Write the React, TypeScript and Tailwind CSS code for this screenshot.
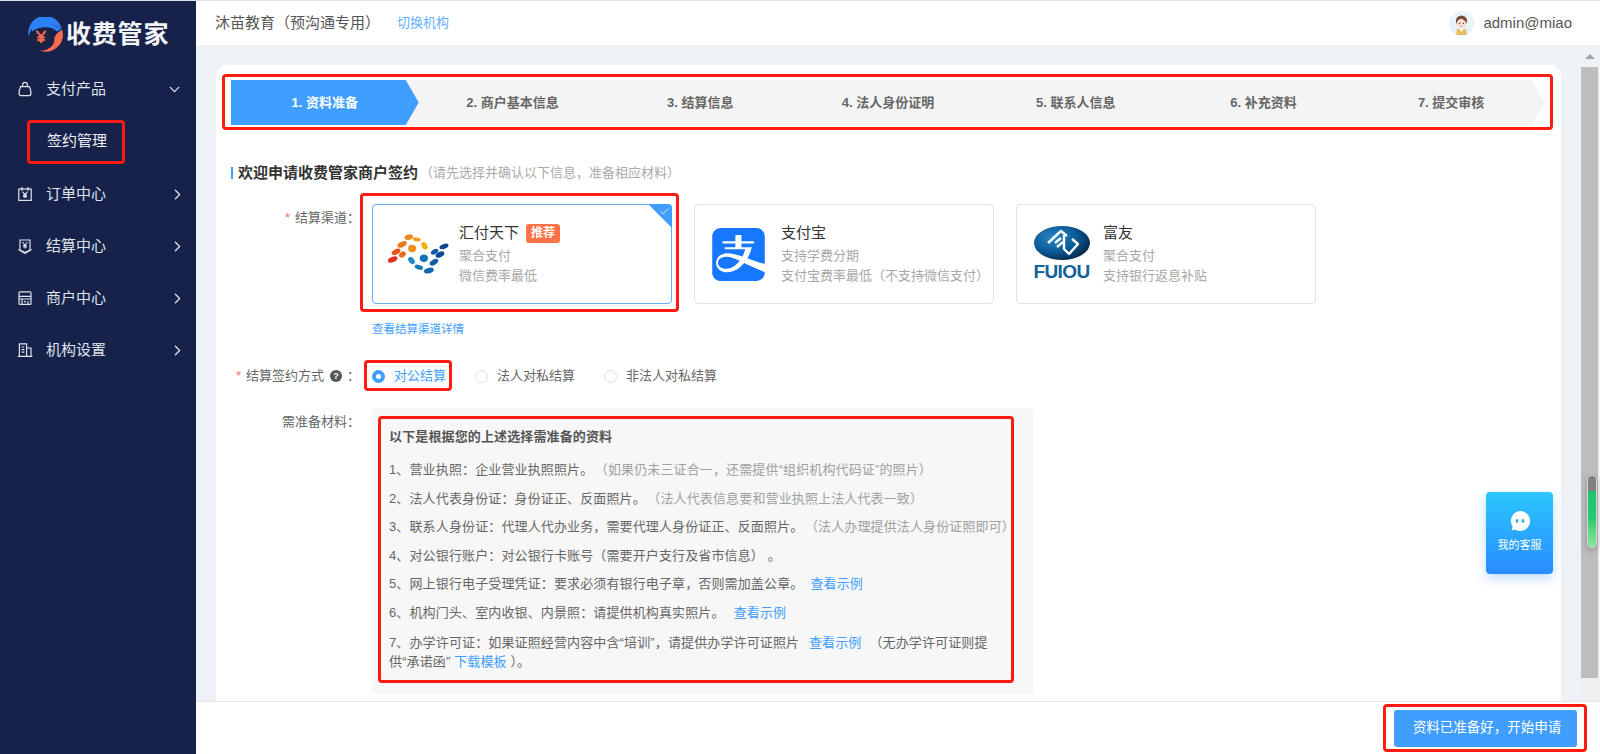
import { ChevronDown, ChevronRight, Check } from "lucide-react";
import { SiAlipay } from "react-icons/si";
import type { ReactNode } from "react";

// red annotation frame drawn over a block of the page
function RedBox({ className }: { className: string }) {
  return <div className={`pointer-events-none absolute rounded-[4px] border-[3px] border-[#ff1a12] ${className}`} />;
}

function Yen({ x, y, s = 1 }: { x: number; y: number; s?: number }) {
  return (
    <path
      transform={`translate(${x} ${y}) scale(${s})`}
      d="M-2.5 -3 L0 0 L2.5 -3 M0 0 V3.5 M-2 0.5 H2 M-2 2 H2"
      fill="none"
      stroke="currentColor"
      strokeWidth="1.1"
    />
  );
}

const icons: Record<string, ReactNode> = {
  bag: (
    <>
      <path d="M3.6 5.6 H12.4 C13.2 7.5 14 10.5 14 12.6 A2 2 0 0 1 12 14.6 H4 A2 2 0 0 1 2 12.6 C2 10.5 2.8 7.5 3.6 5.6 Z" />
      <path d="M5.6 5.6 V3.8 A2.4 2.4 0 0 1 10.4 3.8 V5.6" />
    </>
  ),
  calendar: (
    <>
      <rect x="1.8" y="3" width="12.4" height="11.4" />
      <path d="M5 1.2 V4.4 M11 1.2 V4.4" strokeWidth="1.6" />
      <Yen x={8} y={8.6} />
    </>
  ),
  shield: (
    <>
      <path d="M3 2 H13 V12 L8 14.6 L3 12 Z" />
      <path d="M1.4 11.4 L8 15.4 L14.6 11.4" />
      <Yen x={8} y={7} />
    </>
  ),
  store: (
    <>
      <rect x="2" y="1.8" width="12" height="12.6" rx="1" />
      <path d="M2 6.4 H14 M2 9 H14 M5 9 V14.4 M11 11 V14.4 M7 11.6 H9" />
    </>
  ),
  building: (
    <>
      <path d="M2.4 14 V1.8 H9.6 V14" />
      <path d="M9.6 6 H14 V14" />
      <path d="M4.6 5 H7.4 M4.6 7.6 H7.4 M4.6 10.2 H7.4 M0.8 14.4 H15.4" />
    </>
  ),
};

function MenuItem({ icon, label, open }: { icon: string; label: string; open?: boolean }) {
  return (
    <div className="flex h-[52px] items-center pl-[17px] pr-[10px] text-[15px] text-[#dfe3ec]">
      <svg viewBox="0 0 16 16" fill="none" stroke="currentColor" strokeWidth="1.2" className="h-4 w-4 shrink-0">
        {icons[icon]}
      </svg>
      <span className="ml-[13px] flex-1">{label}</span>
      {open ? (
        <ChevronDown size={17} strokeWidth={1.8} className="mr-[3px]" />
      ) : (
        <ChevronRight size={17} strokeWidth={1.8} />
      )}
    </div>
  );
}

function Sidebar() {
  return (
    <aside className="w-[196px] shrink-0 bg-[#16224a]">
      <div className="flex h-[62px] items-center pl-[28px] pt-[4px]">
        <svg viewBox="0 0 36 36" className="h-[35px] w-[35px]">
          <path d="M0.5 20 A17.5 17.5 0 0 1 35 13 C30 7 17 6 8 9 C4 11 2 15 0.5 20 Z" fill="#2b80f5" />
          <path d="M35 13 A17.5 17.5 0 0 1 12 34.5 C22 35 28 28 27 22 C28 18 31 15 35 13 Z" fill="#ff6a4f" />
          <circle cx="13.5" cy="20" r="10.5" fill="#1b2440" />
          <path d="M4 11 C10 6 24 5 34 12 L30 15 C24 9 12 9 4 15 Z" fill="#2b80f5" />
          <g className="text-[#ff6a4f]">
            <Yen x={13.5} y={20} s={1.9} />
          </g>
        </svg>
        <span className="ml-[3px] text-[25px] font-bold leading-none tracking-[0.8px] text-[#f2f4f8]">收费管家</span>
      </div>
      <MenuItem icon="bag" label="支付产品" open />
      <div className="relative flex h-[53px] items-center pl-[47px] text-[15px] text-[#eef0f5]">
        签约管理
        <RedBox className="left-[27px] top-[5px] h-[44px] w-[98px]" />
      </div>
      <MenuItem icon="calendar" label="订单中心" />
      <MenuItem icon="shield" label="结算中心" />
      <MenuItem icon="store" label="商户中心" />
      <MenuItem icon="building" label="机构设置" />
    </aside>
  );
}

function Header() {
  return (
    <header className="flex h-[44px] shrink-0 items-center bg-white pl-[19px] pr-[28px]">
      <span className="text-[15px] text-[#555]">沐苗教育（预沟通专用）</span>
      <span className="ml-[17px] text-[13px] text-[#66b1ff]">切换机构</span>
      <svg viewBox="0 0 25 25" className="ml-auto h-[25px] w-[25px]">
        <circle cx="12.5" cy="12.5" r="12.5" fill="#e8f3fb" />
        <path d="M7 24 L8 18 H17 L18 24 Z" fill="#e5bd62" />
        <path d="M10.5 18 L12.5 21 L14.5 18 Z" fill="#fff" />
        <circle cx="12.5" cy="10" r="5.6" fill="#7a4a34" />
        <ellipse cx="12.5" cy="12.4" rx="4.6" ry="4.8" fill="#fbdcd0" />
        <path d="M8 11 C9 8 12 8 13 7.6 C14 9 16 9.5 17 11 L17 8 L13 5.6 L9 6.6 Z" fill="#7a4a34" />
        <circle cx="10.6" cy="12.4" r="0.6" fill="#333" />
        <circle cx="14.4" cy="12.4" r="0.6" fill="#333" />
        <circle cx="12.5" cy="15.2" r="0.7" fill="#ef7a80" />
      </svg>
      <span className="ml-[9px] text-[15px] text-[#555]">admin@miao</span>
    </header>
  );
}

const STEPS = ["1. 资料准备", "2. 商户基本信息", "3. 结算信息", "4. 法人身份证明", "5. 联系人信息", "6. 补充资料", "7. 提交审核"];

function Steps() {
  return (
    <div className="relative mr-[16px] h-[45px]">
      <div className="grid h-full grid-cols-7 bg-[#f4f4f4] [clip-path:polygon(0_0,calc(100%-13px)_0,100%_50%,calc(100%-13px)_100%,0_100%)]">
        {STEPS.map((s, i) => (
          <div
            key={s}
            className={
              i === 0
                ? "flex items-center justify-center bg-[#409eff] text-[13px] font-bold text-white [clip-path:polygon(0_0,calc(100%-13px)_0,100%_50%,calc(100%-13px)_100%,0_100%)]"
                : "flex items-center justify-center text-[13px] font-bold text-[#666]"
            }
          >
            {s}
          </div>
        ))}
      </div>
      <RedBox className="-bottom-[5px] -left-[9px] -right-[8px] -top-[6px]" />
    </div>
  );
}

function HuifuLogo() {
  const dots: [number, number, number, number, number, string][] = [
    [37, 107, 15, 8, -20, "#e0301e"],
    [47, 84, 14, 8, -25, "#e8561f"],
    [66, 92, 11, 8, -35, "#e96a20"],
    [65, 62, 15, 8, -25, "#ec7a1e"],
    [85, 40, 13, 8, -15, "#ee8a25"],
    [95, 74, 12, 11, 0, "#f09020"],
    [109, 47, 12, 6, 10, "#eea020"],
    [132, 66, 8, 12, -30, "#f0b010"],
    [93, 110, 8, 12, -40, "#1e88d0"],
    [115, 130, 13, 7, 15, "#1a78c0"],
    [130, 103, 12, 11, 0, "#1070b8"],
    [145, 140, 15, 8, -15, "#0f68b0"],
    [160, 115, 14, 8, -30, "#0f5fa8"],
    [178, 92, 14, 8, -25, "#0a4c98"],
    [162, 84, 12, 7, -30, "#0f5aa5"],
    [190, 68, 14, 7, -20, "#0a4590"],
  ];
  return (
    <svg viewBox="20 28 185 125" className="ml-[3px] h-[42px] w-[62px]">
      {dots.map(([cx, cy, rx, ry, r, c]) => (
        <ellipse key={`${cx}-${cy}`} cx={cx} cy={cy} rx={rx} ry={ry} fill={c} transform={`rotate(${r} ${cx} ${cy})`} />
      ))}
    </svg>
  );
}

function FuiouLogo() {
  return (
    <div className="ml-[3px] flex w-[58px] flex-col items-center">
      <svg viewBox="0 0 56 34" className="h-[34px] w-[56px]">
        <defs>
          <radialGradient id="fuiou" cx="35%" cy="35%" r="75%">
            <stop offset="0%" stopColor="#2a86c6" />
            <stop offset="55%" stopColor="#0c5a96" />
            <stop offset="100%" stopColor="#06223f" />
          </radialGradient>
        </defs>
        <ellipse cx="28" cy="17" rx="28" ry="17" fill="url(#fuiou)" />
        <path
          d="M14 17 L27 5 L33 10 M21 17 L27 12 M23 21 L29 16 M30 9 L30 23 L35 28 L44 18 L38 13"
          fill="none"
          stroke="#fff"
          strokeWidth="2.4"
          strokeLinejoin="round"
        />
      </svg>
      <span className="mt-[2px] text-[19px] font-bold leading-[20px] tracking-[-0.6px] text-[#12629c]">FUIOU</span>
    </div>
  );
}

function Channel({
  logo,
  name,
  lines,
  selected,
  badge,
}: {
  logo: ReactNode;
  name: string;
  lines: string[];
  selected?: boolean;
  badge?: string;
}) {
  return (
    <div
      className={`relative flex h-[100px] w-[300px] items-center rounded-[4px] border ${
        selected ? "border-[#66aef8]" : "border-[#e2e2e2]"
      }`}
    >
      <div className="flex w-[86px] shrink-0 justify-center">{logo}</div>
      <div>
        <div className="-mt-[1px] mb-[1px] flex h-[22px] items-center text-[15px] text-[#333]">
          {name}
          {badge && (
            <span className="ml-[7px] rounded-[3px] bg-[#ff7147] px-[5px] text-[12px] font-bold leading-[19px] text-white">
              {badge}
            </span>
          )}
        </div>
        {lines.map((l) => (
          <div key={l} className="mt-[1px] whitespace-nowrap text-[13px] leading-[19px] text-[#a8a8a8]">
            {l}
          </div>
        ))}
      </div>
      {selected && (
        <>
          <div className="absolute -right-px -top-px h-[24px] w-[24px] rounded-tr-[4px] bg-[#409eff] [clip-path:polygon(0_0,100%_0,100%_100%)]" />
          <Check size={11} strokeWidth={1.6} className="absolute right-[1px] top-[1px] text-white" />
        </>
      )}
    </div>
  );
}

function Radio({ label, checked, className }: { label: string; checked?: boolean; className?: string }) {
  return (
    <div className={`flex items-center text-[13px] ${checked ? "text-[#409eff]" : "text-[#666]"} ${className ?? ""}`}>
      {checked ? (
        <span className="flex h-[13px] w-[13px] items-center justify-center rounded-full bg-[#409eff]">
          <span className="h-[5px] w-[5px] rounded-full bg-white" />
        </span>
      ) : (
        <span className="h-[13px] w-[13px] rounded-full border border-[#dcdfe6]" />
      )}
      <span className="ml-[9px]">{label}</span>
    </div>
  );
}

function Label({ required, children }: { required?: boolean; children: ReactNode }) {
  return (
    <div className="mr-[12px] flex w-[129px] shrink-0 items-center justify-end whitespace-nowrap text-[13px] text-[#666]">
      {required && <span className="mr-[5px] text-[#f56c6c]">*</span>}
      {children}
    </div>
  );
}

const A = ({ children }: { children: ReactNode }) => <span className="text-[#409eff]">{children}</span>;
const Dim = ({ children }: { children: ReactNode }) => <span className="ml-[8px] text-[#a0a0a0]">{children}</span>;

function Materials() {
  return (
    <div className="relative w-[662px] rounded-[4px] bg-[#f7f7f7] pb-[23px] pl-[17px] pr-[18px] pt-[19px] text-[13px] leading-[19px] tracking-[0.13px] text-[#666]">
      <div className="mb-[14px] font-bold text-[#555]">以下是根据您的上述选择需准备的资料</div>
      <div className="flex flex-col gap-[9.6px]">
        <div>
          1、营业执照：企业营业执照照片。<Dim>（如果仍未三证合一，还需提供“组织机构代码证”的照片）</Dim>
        </div>
        <div>
          2、法人代表身份证：身份证正、反面照片。<Dim>（法人代表信息要和营业执照上法人代表一致）</Dim>
        </div>
        <div className="whitespace-nowrap">
          3、联系人身份证：代理人代办业务，需要代理人身份证正、反面照片。<Dim>（法人办理提供法人身份证照即可）</Dim>
        </div>
        <div>4、对公银行账户：对公银行卡账号（需要开户支行及省市信息） 。</div>
        <div>
          5、网上银行电子受理凭证：要求必须有银行电子章，否则需加盖公章。<span className="ml-[7px]"><A>查看示例</A></span>
        </div>
        <div>
          6、机构门头、室内收银、内景照：请提供机构真实照片。<span className="ml-[9px]"><A>查看示例</A></span>
        </div>
        <div className="mt-[1px] whitespace-nowrap">
          7、办学许可证：如果证照经营内容中含“培训”，请提供办学许可证照片 <span className="ml-[6px]"><A>查看示例</A></span>
          <span className="ml-[8px]">（无办学许可证则提</span>
          <br />
          <span>供“承诺函” </span>
          <A>下载模板</A>
          <span> ）。</span>
        </div>
      </div>
      <RedBox className="bottom-[11px] left-[6px] right-[20px] top-[8px]" />
    </div>
  );
}

function Scrollbar() {
  return (
    <div className="relative ml-[20px] mr-[2px] flex w-[17px] shrink-0 flex-col">
      <div className="flex h-[22px] items-center justify-center">
        <span className="h-0 w-0 border-x-[5px] border-b-[5px] border-x-transparent border-b-[#a3a3a3]" />
      </div>
      <div className="h-[611px] bg-[#bdbdbd]" />
      <div className="-mr-[2px] flex-1 bg-[#f0f0f0]" />
      <div className="absolute left-[6px] top-[430px] flex h-[73px] w-[10px] flex-col overflow-hidden rounded-full border border-[#d5d5d5] shadow-[0_2px_6px_rgba(0,0,0,0.25)]">
        <div className="h-[15px] bg-[#808080]" />
        <div className="flex-1 bg-gradient-to-b from-[#1fc46a] via-[#28ca70] to-[#8ce69a]" />
      </div>
    </div>
  );
}

function Help() {
  return (
    <div className="absolute left-[1290px] top-[447px] flex h-[82px] w-[67px] flex-col items-center rounded-[4px] bg-gradient-to-b from-[#2dc6ff] to-[#2b8bff] shadow-[0_4px_12px_rgba(64,158,255,0.35)]">
      <svg viewBox="0 0 20 20" className="mt-[19px] h-[20px] w-[20px]">
        <path d="M10 0 A10 10 0 1 1 5 18.6 L1.6 19.6 L2.6 15.6 A10 10 0 0 1 10 0 Z" fill="#fff" />
        <ellipse cx="7" cy="10" rx="1.4" ry="1.9" fill="#39a6f5" />
        <ellipse cx="13" cy="10" rx="1.4" ry="1.9" fill="#39a6f5" />
      </svg>
      <span className="mt-[7px] text-[11px] leading-[14px] text-white">我的客服</span>
    </div>
  );
}

export default function App() {
  return (
    <div className="flex h-screen w-full flex-col overflow-hidden font-['Liberation_Sans','Noto_Sans_CJK_SC',sans-serif]">
      <div className="h-px shrink-0 bg-[#e0e0e0]" />
      <div className="flex min-h-0 flex-1">
        <Sidebar />
        <div className="flex min-w-0 flex-1 flex-col">
          <Header />
          <div className="relative flex min-h-0 flex-1 overflow-hidden bg-[#eef1f6] pl-[20px]">
            <main className="mt-[20px] h-[700px] w-[1345px] shrink-0 rounded-[10px] bg-white pl-[15px] pt-[15px]">
              <Steps />
              <div className="mt-[39px] flex h-[18px] items-center">
                <span className="h-[12px] w-[2px] bg-[#409eff]" />
                <span className="ml-[5px] text-[15px] font-bold text-[#333]">欢迎申请收费管家商户签约</span>
                <span className="ml-[2px] text-[13px] text-[#aaa]">（请先选择并确认以下信息，准备相应材料）</span>
              </div>
              <div className="mt-[22px] flex">
                <div className="flex h-[28px] items-center">
                  <Label required>结算渠道：</Label>
                </div>
                <div>
                  <div className="flex gap-[22px]">
                    <div className="relative">
                      <Channel
                        selected
                        logo={<HuifuLogo />}
                        name="汇付天下"
                        badge="推荐"
                        lines={["聚合支付", "微信费率最低"]}
                      />
                      <RedBox className="-bottom-[8px] -left-[12px] -right-[7px] -top-[11px]" />
                    </div>
                    <Channel
                      logo={<SiAlipay size={53} color="#1677ff" />}
                      name="支付宝"
                      lines={["支持学费分期", "支付宝费率最低（不支持微信支付）"]}
                    />
                    <Channel logo={<FuiouLogo />} name="富友" lines={["聚合支付", "支持银行返息补贴"]} />
                  </div>
                  <div className="mt-[17px] text-[11.5px] leading-[16px] text-[#409eff]">查看结算渠道详情</div>
                </div>
              </div>
              <div className="mt-[29px] flex h-[20px] items-center">
                <Label required>
                  结算签约方式
                  <span className="ml-[6px] mr-[5px] flex h-[12px] w-[12px] items-center justify-center rounded-full bg-[#555] text-[9px] font-bold leading-none text-white">
                    ?
                  </span>
                  ：
                </Label>
                <div className="relative flex">
                  <Radio checked label="对公结算" className="w-[103px]" />
                  <Radio label="法人对私结算" className="w-[129px]" />
                  <Radio label="非法人对私结算" />
                  <RedBox className="-left-[8px] -top-[6px] h-[31px] w-[88px]" />
                </div>
              </div>
              <div className="mt-[22px] flex">
                <div className="flex h-[28px] items-center">
                  <Label>需准备材料：</Label>
                </div>
                <Materials />
              </div>
            </main>
            <Scrollbar />
            <Help />
          </div>
          <footer className="flex h-[53px] shrink-0 items-center justify-end border-t border-[#e4e4e4] bg-white pr-[23px]">
            <div className="relative">
              <button className="flex h-[37px] w-[183px] items-center justify-center rounded-[3px] bg-[#409eff] pl-[3px] text-[13.5px] text-white">
                资料已准备好，开始申请
              </button>
              <RedBox className="-bottom-[5px] -left-[11px] -right-[10px] -top-[6px]" />
            </div>
          </footer>
        </div>
      </div>
    </div>
  );
}
